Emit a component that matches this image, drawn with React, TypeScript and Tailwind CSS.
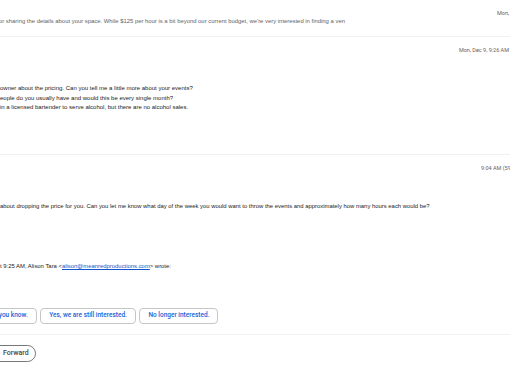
import React from 'react';

const suggestions = ["I'll let you know.", 'Yes, we are still interested.', 'No longer interested.'];

export default function App() {
  return (
    <div className="w-[510px] h-[382px] overflow-hidden bg-white font-['Liberation_Sans',Arial,sans-serif] text-[5.9px] text-[#222]">
      {/* collapsed message */}
      <div className="h-[37px] pt-[9px] border-b border-[#eff1f3]">
        <div className="pl-[497px] leading-[8px] whitespace-nowrap font-['Roboto',sans-serif] text-[5.5px] text-[#5f6368]">Mon, Dec 9, 9:21 AM</div>
        <div className="-ml-[1px] leading-[8px] whitespace-nowrap text-[#5f6368]">
          or sharing the details about your space. While $125 per hour is a bit beyond our current budget, we're very interested in finding a ven
        </div>
      </div>

      {/* expanded message */}
      <div className="h-[118px] pt-[9px] border-b border-[#eff1f3]">
        <div className="flex justify-end pr-[1px] leading-[8px] whitespace-nowrap font-['Roboto',sans-serif] text-[5.5px] text-[#5f6368]">Mon, Dec 9, 9:26 AM</div>
        <div className="mt-[30px] leading-[9.5px] whitespace-nowrap text-[6px]">
          <p>owner about the pricing. Can you tell me a little more about your events?</p>
          <p>eople do you usually have and would this be every single month?</p>
          <p>in a licensed bartender to serve alcohol, but there are no alcohol sales.</p>
        </div>
      </div>

      {/* latest message */}
      <div className="h-[180px] pt-[9px] border-b border-[#eff1f3]">
        <div className="pl-[481px] leading-[8px] whitespace-nowrap font-['Roboto',sans-serif] text-[5.5px] text-[#5f6368]">9:04 AM (59 minutes ago)</div>
        <p className="mt-[30px] leading-[9.5px] whitespace-nowrap">
          about dropping the price for you. Can you let me know what day of the week you would want to throw the events and approximately how many hours each would be?
        </p>
        <p className="mt-[50.5px] leading-[9.5px] whitespace-nowrap">
          t 9:25 AM, Alison Tara &lt;<a className="text-[#1155cc] underline">alison@meanredproductions.com</a>&gt; wrote:
        </p>
        <div className="mt-[36px] flex gap-[3.5px] -ml-[27px] font-['Roboto',sans-serif]">
          {suggestions.map((s) => (
            <button
              key={s}
              className="h-[16px] px-[8px] rounded-[4px] border border-[#c4c7c5] text-[6.5px] font-medium text-[#1a5fd6] whitespace-nowrap"
            >
              {s}
            </button>
          ))}
        </div>
      </div>

      {/* actions */}
      <div className="pt-[10px] flex -ml-[20px] font-['Roboto',sans-serif]">
        <button className="h-[17px] pl-[22px] pr-[6px] rounded-full border border-[#747775] text-[7px] font-medium text-[#444746]">
          Forward
        </button>
      </div>
    </div>
  );
}
